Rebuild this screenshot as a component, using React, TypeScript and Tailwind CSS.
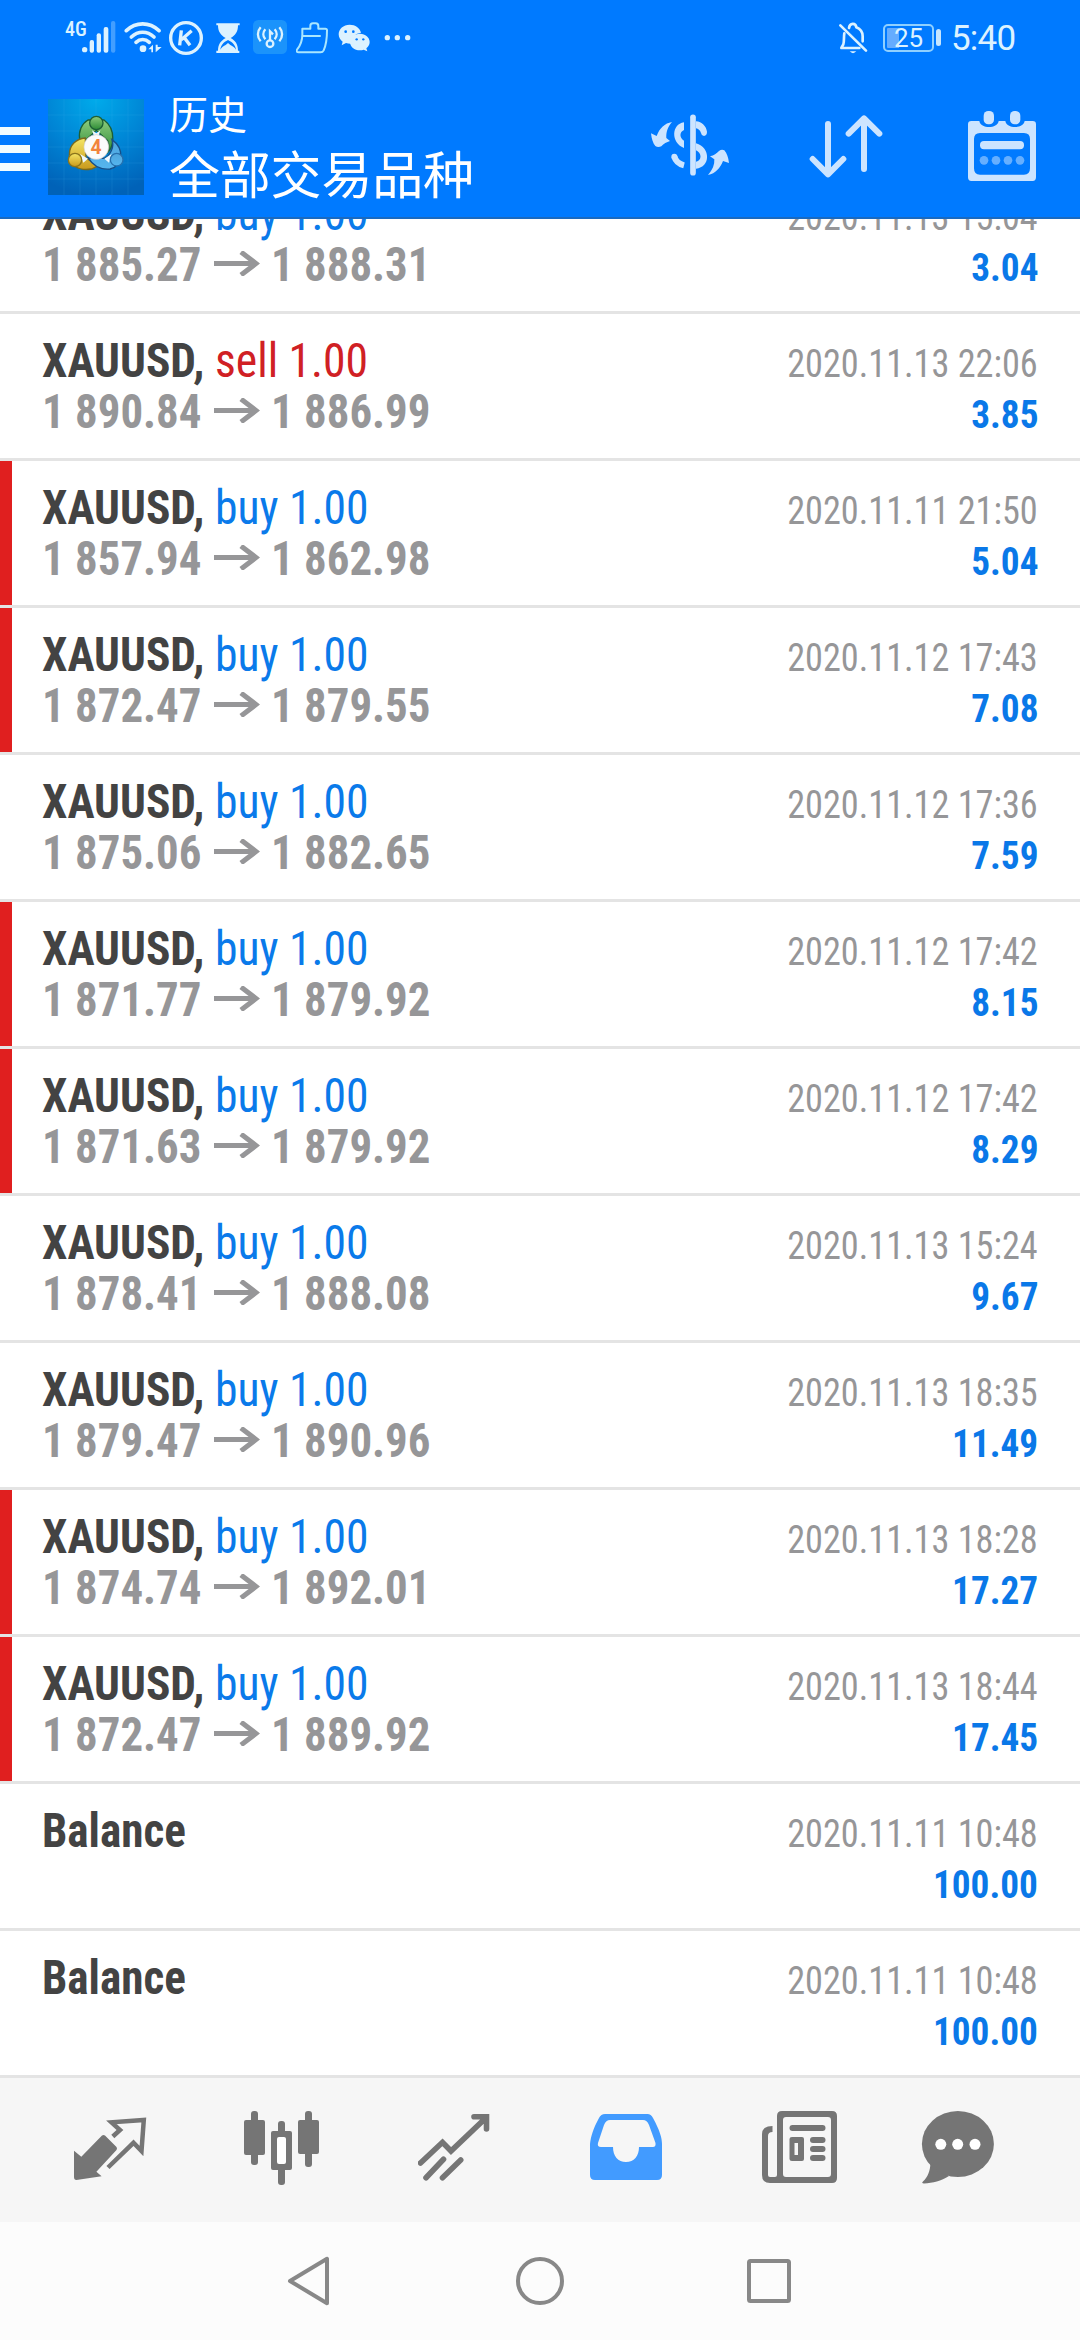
import type { ReactNode } from 'react'
import clsx from 'clsx'

type Deal = {
  side?: 'buy' | 'sell'
  open?: string
  close?: string
  time: string
  profit: string
  marked?: boolean
}

const deals: Deal[] = [
  { side: 'buy', open: '1 885.27', close: '1 888.31', time: '2020.11.13 15:04', profit: '3.04' },
  { side: 'sell', open: '1 890.84', close: '1 886.99', time: '2020.11.13 22:06', profit: '3.85' },
  { side: 'buy', open: '1 857.94', close: '1 862.98', time: '2020.11.11 21:50', profit: '5.04', marked: true },
  { side: 'buy', open: '1 872.47', close: '1 879.55', time: '2020.11.12 17:43', profit: '7.08', marked: true },
  { side: 'buy', open: '1 875.06', close: '1 882.65', time: '2020.11.12 17:36', profit: '7.59' },
  { side: 'buy', open: '1 871.77', close: '1 879.92', time: '2020.11.12 17:42', profit: '8.15', marked: true },
  { side: 'buy', open: '1 871.63', close: '1 879.92', time: '2020.11.12 17:42', profit: '8.29', marked: true },
  { side: 'buy', open: '1 878.41', close: '1 888.08', time: '2020.11.13 15:24', profit: '9.67' },
  { side: 'buy', open: '1 879.47', close: '1 890.96', time: '2020.11.13 18:35', profit: '11.49' },
  { side: 'buy', open: '1 874.74', close: '1 892.01', time: '2020.11.13 18:28', profit: '17.27', marked: true },
  { side: 'buy', open: '1 872.47', close: '1 889.92', time: '2020.11.13 18:44', profit: '17.45', marked: true },
  { time: '2020.11.11 10:48', profit: '100.00' },
  { time: '2020.11.11 10:48', profit: '100.00' },
]

type IconProps = { box: string; w: number; h: number; className?: string; children: ReactNode }

const Icon = ({ box, w, h, className, children }: IconProps) => (
  <svg viewBox={box} width={w} height={h} className={clsx('shrink-0', className)} fill="none">
    {children}
  </svg>
)

const StatusBar = () => (
  <div className="flex h-[75px] items-center pr-[64px] pl-[65px] text-[#dcf2ff]">
    <span className="mb-[18px] w-[17px] text-[20px] leading-none font-medium [font-stretch:75%]">4G</span>
    <Icon box="126 57 105 111" w={35} h={37}>
      <g fill="currentColor">
        <circle cx="134" cy="149" r="8" />
        <rect x="149" y="120" width="13" height="38" rx="6" />
        <rect x="170" y="100" width="13" height="58" rx="6" />
        <rect x="191" y="81" width="14" height="77" rx="6" />
        <rect x="213" y="63" width="13" height="95" rx="6" opacity=".3" />
      </g>
    </Icon>
    <Icon box="252 57 117 111" w={39} h={37} className="ml-[7px]">
      <g stroke="currentColor" strokeWidth="11" strokeLinecap="round">
        <path d="M259 92C288 65 328 65 357 92" />
        <path d="M274 111C294 92 322 92 342 111" />
        <path d="M288 127C300 116 316 116 328 127" />
      </g>
      <circle cx="309" cy="146" r="10" fill="currentColor" />
      <path d="M325 148l14-14v23h-5v-9zM347 134v23l18-16h-12v-7z" fill="currentColor" />
    </Icon>
    <Icon box="384 57 108 111" w={36} h={37} className="ml-[5px]">
      <circle cx="438" cy="114" r="46" stroke="currentColor" strokeWidth="10" />
      <path d="M424 91l-5 45M455 92l-31 27M432 112l18 24" stroke="currentColor" strokeWidth="10" />
    </Icon>
    <Icon box="528 57 72 111" w={24} h={37} className="ml-[12px]">
      <path d="M529 70h70v6h-5c0 20-8 30-22 38 14 8 22 18 22 38h4v7h-69v-7h5c0-20 9-30 23-38-14-8-23-18-23-38h-5z" fill="currentColor" />
      <path d="M541 149c2-14 9-22 23-29 14 7 22 15 24 29-4-7-12-11-17-14l-7-6-7 6c-6 3-12 7-16 14z" fill="#007aff" />
    </Icon>
    <Icon box="636 57 108 111" w={36} h={37} className="ml-[12px]">
      <rect x="639" y="60" width="102" height="102" rx="16" fill="#1b93fb" />
      <g stroke="currentColor" strokeWidth="7">
        <path d="M662 82c-11 12-11 30 0 42M676 88c-8 9-8 21 0 30M718 82c11 12 11 30 0 42M704 88c8 9 8 21 0 30" />
        <circle cx="690" cy="131" r="10" />
        <path d="M690 121V94l9 9" />
      </g>
    </Icon>
    <Icon box="768 57 96 111" w={32} h={37} className="ml-[8px]">
      <path d="M787 86h24v-8q0-8 8-8h8q8 0 8 8v8h21q5 0 5 5c0 26-2 43-10 60q-3 6-9 6h-66q-8 0-5-8c10-12 17-26 16-50zM788 108h52" stroke="#a9e6ff" strokeWidth="6" strokeLinejoin="round" strokeLinecap="round" />
    </Icon>
    <Icon box="894 57 99 111" w={33} h={37} className="ml-[10px]">
      <path d="M929 74c-19 0-33 13-33 29 0 9 5 17 12 22l-3 11 13-7q6 2 13 2h4c0-19 12-31 28-33-3-14-17-24-34-24z" fill="currentColor" />
      <path d="M960 101c-17 0-30 11-30 25s13 25 30 25q6 0 11-2l11 5-3-9c6-5 10-11 10-19 0-14-13-25-29-25z" fill="currentColor" />
      <g fill="#007aff">
        <circle cx="917" cy="95" r="4" />
        <circle cx="940" cy="95" r="4" />
        <circle cx="950" cy="118" r="3.5" />
        <circle cx="970" cy="118" r="3.5" />
      </g>
    </Icon>
    <Icon box="1032 57 81 111" w={27} h={37} className="ml-[13px]">
      <g fill="currentColor">
        <circle cx="1042" cy="113" r="8" />
        <circle cx="1072" cy="113" r="8" />
        <circle cx="1103" cy="113" r="8" />
      </g>
    </Icon>
    <Icon box="114 60 90 102" w={30} h={34} className="ml-auto">
      <path d="M147 81c2-16 20-16 22-2 12 5 19 14 19 27v15M133 97c-2 12 0 24-3 33l-6 11h54" stroke="currentColor" strokeWidth="8" strokeLinecap="round" strokeLinejoin="round" />
      <path d="M121 73l77 76" stroke="currentColor" strokeWidth="8" strokeLinecap="round" />
      <path d="M149 151h20q-10 11-20 0z" fill="currentColor" />
    </Icon>
    <div className="ml-[15px] flex h-[28px] w-[51px] items-center justify-center rounded-[5px] border-2 border-[#8fd0ff] bg-linear-to-r from-[#65acff] from-30% to-transparent to-30% bg-clip-content p-[2px] text-[26px] leading-none">
      25
    </div>
    <div className="ml-[2px] h-[17px] w-[5px] rounded-sm bg-[#c6e6ff]" />
    <span className="ml-[10px] w-[65px] pt-px text-[35px] leading-none tracking-[-0.8px]">5:40</span>
  </div>
)

const Logo = () => (
  <Icon box="144 56 288 288" w={96} h={96} className="ml-[18px]">
    <defs>
      <radialGradient id="sky" cx=".5" cy="0" r="1">
        <stop offset="0" stopColor="#00abeb" />
        <stop offset=".55" stopColor="#0083d4" />
        <stop offset="1" stopColor="#0062b8" />
      </radialGradient>
      <linearGradient id="green" x2="0" y2="1">
        <stop stopColor="#8ccb7c" />
        <stop offset="1" stopColor="#2c8b35" />
      </linearGradient>
      <linearGradient id="yellow" x2="0" y2="1">
        <stop stopColor="#f5e565" />
        <stop offset="1" stopColor="#c99a1c" />
      </linearGradient>
      <linearGradient id="blue" x2="0" y2="1">
        <stop stopColor="#4fa5dc" />
        <stop offset="1" stopColor="#55b6ef" />
      </linearGradient>
    </defs>
    <rect x="144" y="56" width="288" height="288" fill="url(#sky)" />
    <path d="M192 56v288M240 56v288M288 56v288M336 56v288M384 56v288M144 104h288M144 152h288M144 200h288M144 248h288M144 296h288" stroke="#48b6f2" strokeOpacity=".22" strokeWidth="2" />
    <g strokeWidth="4">
      <path d="M264 119c-19 11-29 34-25 58l16 4 34-31 34 31c6 15 4 27-4 39 23-16 31-73-7-101z" fill="url(#green)" stroke="#1d5f35" />
      <path d="M256 173c-28 2-48 22-48 50 0 30 26 50 66 43l18-8-34-26z" fill="url(#yellow)" stroke="#7a6a1d" />
      <path d="M336 178c7 20-3 45-22 56l-50-2c15 24 38 37 66 34 35-6 48-58 6-88z" fill="url(#blue)" stroke="#164f88" />
      <path d="M240 221l24 14-14 12zM313 235l22-14-8 26zM276 150l13 9 12-9-4 14h-16z" fill="#eef8ff" />
      <circle cx="289" cy="128" r="20" fill="url(#green)" stroke="#1d5f35" />
      <circle cx="225" cy="239" r="20" fill="url(#yellow)" stroke="#8a741c" />
      <circle cx="350" cy="238" r="19" fill="url(#blue)" stroke="#2770ad" />
    </g>
    <circle cx="289" cy="200" r="37" fill="#fbfbfb" stroke="#d8d0c8" strokeWidth="2" />
    <text x="288" y="220" textAnchor="middle" fontFamily="Roboto" fontSize="58" fontWeight="700" fill="#f2843c">
      4
    </text>
  </Icon>
)

const Header = () => (
  <header className="h-[219px] shrink-0 border-b-2 border-[#1a6ac0] bg-[#007aff]">
    <StatusBar />
    <div className="flex h-[144px] items-center">
      <div className="mt-1 flex w-[30px] flex-col gap-[10px]">
        <div className="h-2 bg-[#f2fcff]" />
        <div className="h-2 bg-[#f2fcff]" />
        <div className="h-2 bg-[#f2fcff]" />
      </div>
      <Logo />
      <div className="mt-[-10px] ml-[25px] flex-1 text-white [font-family:'Noto_Sans_CJK_SC',sans-serif]">
        <div className="text-[39px] leading-[60px]">历史</div>
        <div className="text-[51px] leading-[61px] tracking-[-0.2px]">全部交易品种</div>
      </div>
      <div className="mr-[43px] mb-[2px] flex items-center text-[#cce4ff]">
        <Icon box="90 90 240 216" w={80} h={72} className="mr-[79px]">
          <path d="M219 112v166" stroke="currentColor" strokeWidth="17" strokeLinecap="round" />
          <path d="M192 127c-38 5-40 62 0 77v-22c-14-9-14-26 0-32zM228 124c18 1 30 14 33 31q0 11-9 13-8-1-9-9c-3-8-8-13-15-14zM228 190c45 12 44 73 0 76v-21c18-3 18-26 0-34z" fill="currentColor" />
          <path d="M163 230c4 14 13 22 29 26" stroke="currentColor" strokeWidth="18" />
          <circle cx="163" cy="230" r="9" fill="currentColor" />
          <path d="M156 126c-14 16-18 32-17 48l11 9c-10 3-19 8-26 16q-10 5-18-1c-7-8-11-20-13-38l17 8c9-24 24-38 46-42zM264 285c14-15 20-31 19-47l-13-9c13-3 19-9 27-16q8-6 16-2c8 9 12 22 14 38l-18-6c-9 22-22 37-45 42z" fill="currentColor" />
        </Icon>
        <Icon box="567 90 222 216" w={74} h={72} className="mr-[84px]">
          <path d="M624 132v150M578 237l46 46 46-46M732 267V116M686 161l46-46 46 46" stroke="currentColor" strokeWidth="18" strokeLinecap="round" strokeLinejoin="round" />
        </Icon>
        <Icon box="1041 90 210 216" w={70} h={72}>
          <path fillRule="evenodd" d="M1054 123h24c4 24 54 24 58 0h20c4 24 54 24 58 0h24q10 0 10 10v159q0 11-10 11h-184q-10 0-10-11V133q0-10 10-10zm26 36q-18 0-18 18v88q0 19 18 19h132q18 0 18-19v-88q0-18-18-18z" fill="currentColor" />
          <rect x="1091" y="93" width="31" height="40" rx="14" fill="currentColor" />
          <rect x="1170" y="93" width="31" height="40" rx="14" fill="currentColor" />
          <rect x="1080" y="183" width="132" height="25" rx="12" fill="currentColor" />
          <g fill="#66afff">
            <circle cx="1092" cy="241" r="13" />
            <circle cx="1128" cy="241" r="13" />
            <circle cx="1164" cy="241" r="13" />
            <circle cx="1200" cy="241" r="13" />
          </g>
        </Icon>
      </div>
    </div>
  </header>
)

const DealRow = ({ deal }: { deal: Deal }) => (
  <li className="flex h-[147px] border-b-[3px] border-[#e4e4e4] bg-white pr-[42px] [font-family:'Roboto_Condensed',Roboto,sans-serif] [font-stretch:75%]">
    <div className={clsx('w-3', deal.marked && 'bg-[#e01f1f]')} />
    <div className="flex flex-1 flex-col pt-[21px] pl-[30px] text-[48px] leading-[51px] whitespace-nowrap">
      <div className="flex h-[51px]">
        {deal.side ? (
          <>
            <span className="w-[173px] origin-left scale-x-[0.945] font-bold text-[#434343]">XAUUSD,</span>
            <span
              className={clsx('origin-left scale-x-[0.95]', deal.side === 'buy' ? 'text-[#0a7aea]' : 'text-[#d02024]')}
            >
              {deal.side} 1.00
            </span>
          </>
        ) : (
          <span className="origin-left scale-x-[0.94] font-bold text-[#434343]">Balance</span>
        )}
      </div>
      {deal.side && (
        <div className="flex h-[51px] font-bold text-[#969698]">
          <span className="w-[172px] origin-left scale-x-[0.935]">{deal.open}</span>
          <Icon box="0 0 46 25" w={46} h={25} className="mt-[12px] mr-[11px]">
            <path d="M0 12.5h42M27 1l15 11.5L27 24" stroke="currentColor" strokeWidth="5" />
          </Icon>
          <span className="origin-left scale-x-[0.935]">{deal.close}</span>
        </div>
      )}
    </div>
    <div className="flex flex-col items-end pt-[25px] text-[39px] leading-[51px]">
      <span className="origin-right scale-x-[0.929] text-[#969698]">{deal.time}</span>
      <span className="origin-right scale-x-[0.955] font-bold text-[#0a78e8]">{deal.profit}</span>
    </div>
  </li>
)

const TabBar = () => (
  <nav className="flex h-[144px] shrink-0 items-start bg-[#f6f6f6] pt-[32px] pl-[74px] text-[#757575]">
    <Icon box="0 -6 73 76" w={73} h={76} className="mr-[97px]">
      <path d="M0 34.7l7.3 6L28 19.6q1.500-1 3 0L42.500 31q1 1.500 0 3L22.400 55.700l5.200 4.600L2.400 64Q0 64 0 61z" fill="currentColor" />
      <path d="M38.800 20.500L46 14 37.500 6.300 69.800 4 67.500 35l-8-8.200L34 51.500" stroke="currentColor" strokeWidth="4.500" />
    </Icon>
    <Icon box="0 0 75 76" w={75} h={76} className="mr-[99px]">
      <g fill="currentColor">
        <rect y="10" width="21" height="35" rx="2" />
        <rect x="7" y="1" width="7" height="54" rx="3" />
        <rect x="54" y="10" width="21" height="34" rx="2" />
        <rect x="61" y="1" width="7" height="56" rx="3" />
        <rect x="27" y="21" width="21" height="39" rx="2" />
        <rect x="34" y="11" width="7" height="64" rx="3" />
      </g>
      <rect x="33" y="27" width="9" height="27" rx="2" fill="#fff" />
    </Icon>
    <Icon box="0 -3 72 76" w={72} h={76} className="mr-[100px]">
      <path d="M2.500 50l22-20.700L33 38 68 4.700M56 3.700h12.500V16M8 64.700l17.500-18.400M24.500 64.700L42.700 47" stroke="currentColor" strokeWidth="5.600" strokeLinecap="round" />
    </Icon>
    <Icon box="0 -4 72 76" w={72} h={76} className="mr-[100px]">
      <path fillRule="evenodd" d="M15 0h42.500Q61 0 63 4c7 13 9 20 9 26v31q0 5-5 5H5q-5 0-5-5V30C1 22 3 15 9 4q2-4 6-4zm5 6q-4 0-6 5L8 29q-1 4 3 4h12c0 9 5 15 13 15s13-6 13-15h14q3 0 2.500-4L59 11q-2-5-6-5z" fill="#429bff" />
    </Icon>
    <Icon box="0 -1 75 76" w={75} h={76} className="mr-[84px]">
      <path fillRule="evenodd" d="M20 0h50q5 0 5 5v62q0 5-5 5H8q-8 0-8-8V23q0-8 10.500-8v6Q6 21 6 25v39q0 2 2 2h5q2 0 2-2V5q0-5 5-5zm4 6q-3 0-3 3v54q0 3 3 3h42q3 0 3-3V9q0-3-3-3z" fill="currentColor" />
      <g fill="currentColor">
        <rect x="27.500" y="14" width="36" height="6" rx="3" />
        <path fillRule="evenodd" d="M30 26h10q2 0 2 2v20q0 2-2 2H30q-2.500 0-2.500-2V28q0-2 2.500-2zm2.500 6v12H36V32z" />
        <rect x="48" y="26" width="15.500" height="6" rx="3" />
        <rect x="48" y="35" width="15.500" height="6" rx="3" />
        <rect x="48" y="44" width="15.500" height="6" rx="3" />
      </g>
    </Icon>
    <Icon box="0 -1 74 76" w={74} h={76}>
      <path d="M9.500 52C9 60 7 66 2 70.500Q0 72 3 72.500C12 72 20 70 28 65z" fill="currentColor" />
      <ellipse cx="36.900" cy="33" rx="36" ry="33" fill="currentColor" />
      <g fill="#fff">
        <circle cx="19.800" cy="33.300" r="5.500" />
        <circle cx="36.700" cy="33.300" r="5.500" />
        <circle cx="54" cy="33.300" r="5.500" />
      </g>
    </Icon>
  </nav>
)

const SystemNav = () => (
  <div className="flex h-[118px] shrink-0 items-center bg-[#fcfcfc] pl-[287px] text-[#888]">
    <Icon box="0 0 43 50" w={43} h={50}>
      <path d="M3 25L40 2.800v44.400z" stroke="currentColor" strokeWidth="4" strokeLinejoin="round" />
    </Icon>
    <Icon box="0 0 50 50" w={50} h={50} className="ml-[185px]">
      <circle cx="25" cy="25" r="22" stroke="currentColor" strokeWidth="4" />
    </Icon>
    <Icon box="0 0 46 46" w={46} h={46} className="ml-[181px]">
      <rect x="3" y="3" width="40" height="40" rx="1.500" stroke="currentColor" strokeWidth="4" />
    </Icon>
  </div>
)

export default function App() {
  return (
    <div className="flex h-[2340px] w-[1080px] flex-col overflow-hidden bg-white [font-family:Roboto,sans-serif]">
      <Header />
      {/* list is scrolled, so the first row is cut by the header */}
      <main className="flex flex-1 flex-col justify-end overflow-hidden">
        <ul className="shrink-0">
          {deals.map((deal, i) => (
            <DealRow key={i} deal={deal} />
          ))}
        </ul>
      </main>
      <TabBar />
      <SystemNav />
    </div>
  )
}
